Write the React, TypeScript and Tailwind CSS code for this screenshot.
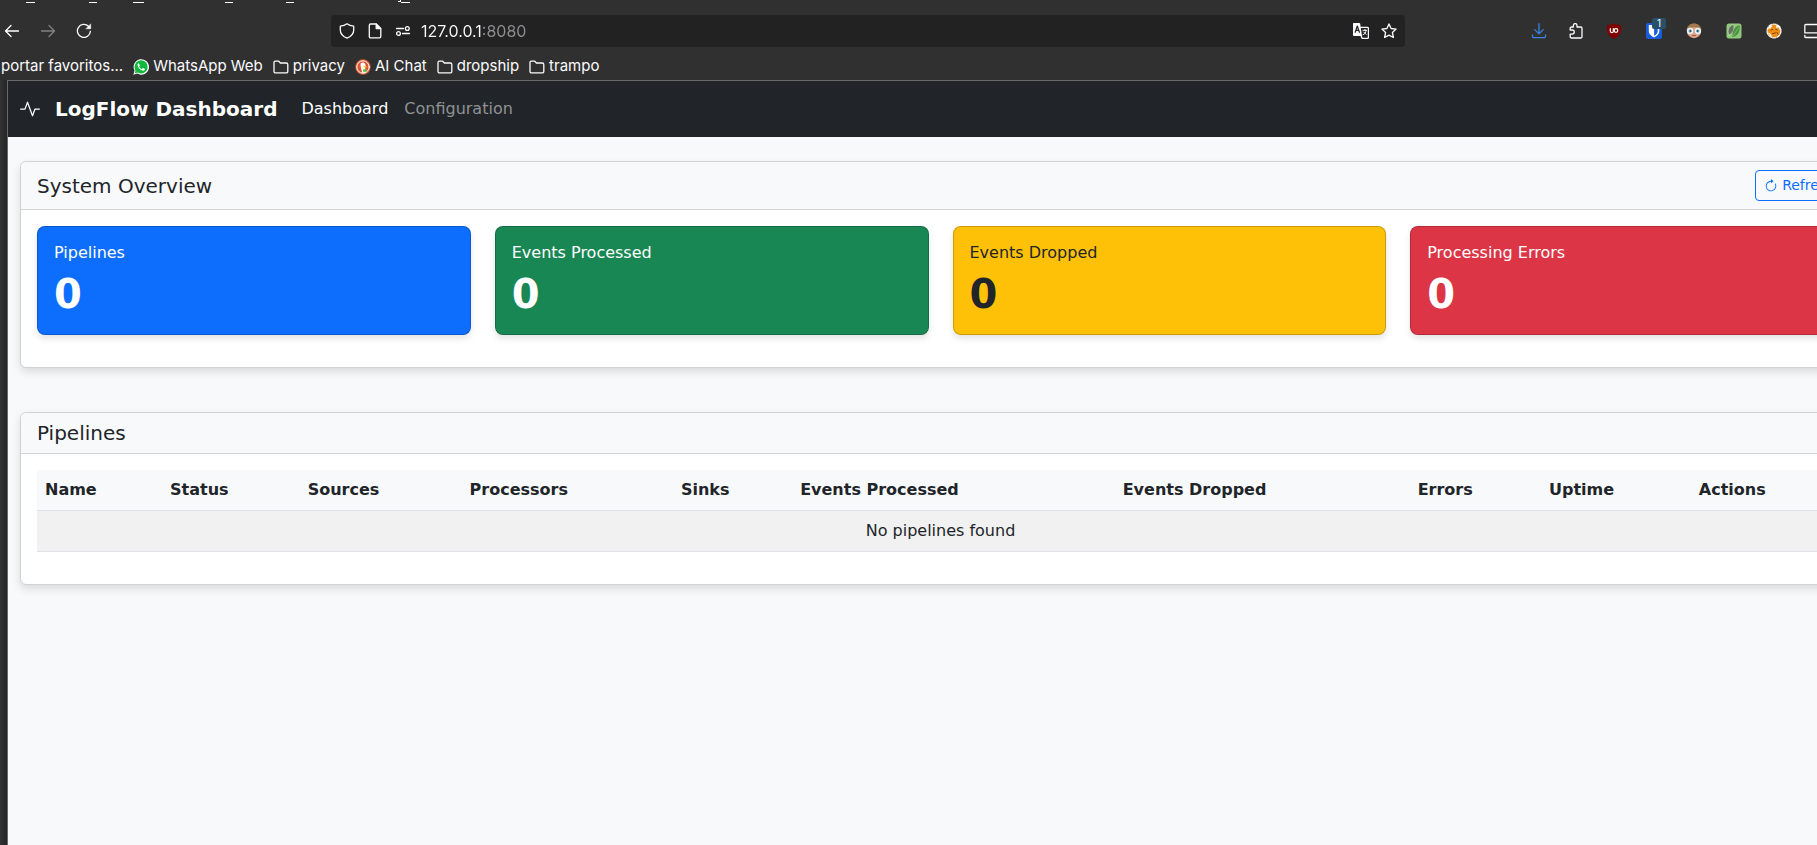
import React from "react";
import { BsActivity, BsArrowClockwise } from "react-icons/bs";

const stats = [
  { label: "Pipelines", value: 0, tone: "bg-[#0d6efd] text-white" },
  { label: "Events Processed", value: 0, tone: "bg-[#198754] text-white" },
  { label: "Events Dropped", value: 0, tone: "bg-[#ffc107] text-[#212529]" },
  { label: "Processing Errors", value: 0, tone: "bg-[#dc3545] text-white" },
];

const columns = [
  "Name",
  "Status",
  "Sources",
  "Processors",
  "Sinks",
  "Events Processed",
  "Events Dropped",
  "Errors",
  "Uptime",
  "Actions",
];

type IconProps = { className?: string; children: React.ReactNode };

function Icon({ className = "", children }: IconProps) {
  return (
    <svg
      viewBox="0 0 16 16"
      className={"size-4 shrink-0 " + className}
      fill="none"
      stroke="currentColor"
      strokeWidth="1.3"
      strokeLinecap="round"
      strokeLinejoin="round"
      aria-hidden="true"
    >
      {children}
    </svg>
  );
}

function ToolButton({ label, width = "w-10", children }: { label: string; width?: string; children: React.ReactNode }) {
  return (
    <button type="button" aria-label={label} className={"flex h-8 shrink-0 items-center justify-center " + width}>
      {children}
    </button>
  );
}

function FolderIcon() {
  return (
    <Icon>
      <path d="M1 12.5v-9A1.3 1.3 0 0 1 2.300 2.200h3.400L7.400 4h6A1.400 1.400 0 0 1 14.800 5.400v7.100a1.400 1.400 0 0 1-1.400 1.400H2.400A1.400 1.400 0 0 1 1 12.500Z" />
    </Icon>
  );
}

function WhatsAppIcon() {
  return (
    <Icon>
      <path d="M.3 15.700 1.500 11.600A7.700 7.700 0 1 1 4.400 14.600Z" fill="#fff" stroke="none" />
      <circle cx="8.100" cy="7.900" r="6.600" fill="#12b83d" stroke="none" />
      <path d="M1.800 14.200l.8-3 2.200 2.300Z" fill="#12b83d" stroke="none" />
      <path
        d="M5.800 4.300c-.9.2-1.300 1-1.200 2 .3 2.600 3 5.200 5.500 5.400 1.100 0 1.900-.6 1.900-1.700l-2-1-1 1.100c-1.200-.4-2.400-1.500-2.900-2.700l.8-1Z"
        fill="#fff"
        stroke="none"
      />
    </Icon>
  );
}

function DuckIcon() {
  return (
    <Icon>
      <circle cx="8" cy="8" r="7.700" fill="#de5833" stroke="none" />
      <circle cx="8" cy="8" r="6.200" fill="#de5833" stroke="#fff" strokeWidth="1" />
      <path d="M5.700 4.200c2-1.500 4.700-.4 4.900 2.300.1 1.300-.5 2.200-.5 3.200l1 4-3.800.2C6.700 10.700 5 7.200 5.700 4.200Z" fill="#fff" stroke="none" />
      <path d="M8.500 7.300h3.300l-1 1.300H8.500Z" fill="#fdd20a" stroke="none" />
      <path d="M7.800 10.600h3.600v2.200H8.200Z" fill="#4cba3c" stroke="none" />
    </Icon>
  );
}

function Bookmark({ icon, label }: { icon: React.ReactNode; label: string }) {
  return (
    <a href="#" className="flex items-center gap-1 whitespace-nowrap">
      {icon}
      {label}
    </a>
  );
}

function TabFragments() {
  return (
    <svg className="block h-[15px] w-[420px] shrink-0" viewBox="0 0 420 15" fill="#fff" aria-hidden="true">
      <rect x="26" y="2" width="9" height="1" />
      <rect x="89" y="2" width="8" height="1" />
      <rect x="133" y="2" width="11" height="1" />
      <rect x="225" y="2" width="8" height="1" />
      <rect x="286" y="2" width="8" height="1" />
      <path d="M398 2h3V0h-1v1h-2ZM401 2h9v1h-9Z" />
    </svg>
  );
}

function BrowserChrome() {
  return (
    <header className="flex h-20 flex-col overflow-hidden bg-[#303030] font-['Inter',sans-serif] text-[#fbfbfe]">
      <TabFragments />
      <div className="flex h-8 shrink-0 items-center">
        <div className="flex w-[331px] shrink-0">
          <div className="-ml-1.5 flex">
            <ToolButton label="Back" width="w-9">
              <Icon className="text-white">
                <path d="M1.500 8h13M7 2.500 1.500 8 7 13.500" />
              </Icon>
            </ToolButton>
            <ToolButton label="Forward" width="w-9">
              <Icon className="text-[#808080]">
                <path d="M1.500 8h13M9 2.500 14.500 8 9 13.500" />
              </Icon>
            </ToolButton>
            <ToolButton label="Reload" width="w-9">
              <Icon className="text-white">
                <path d="M14.400 8.300A6.500 6.500 0 1 1 12.500 3.300" />
                <path d="M14.700 1.200v4.600h-4.600Z" fill="currentColor" strokeWidth=".5" />
              </Icon>
            </ToolButton>
          </div>
        </div>
        <div className="flex h-8 min-w-0 flex-1 items-center rounded bg-[#222222] pr-0.5 pl-2">
          <div className="flex items-center gap-3">
            <Icon>
              <path d="M8 .8C6 2.400 3.700 3 1.300 3.200V7c0 3.700 2.600 6.500 6.700 8.200 4.100-1.700 6.700-4.500 6.700-8.200V3.200C12.300 3 10 2.400 8 .8Z" />
            </Icon>
            <Icon>
              <path d="M3.600 1h5.600l4.600 4.600v7.900a1.300 1.300 0 0 1-1.300 1.300H3.600a1.300 1.300 0 0 1-1.300-1.300V2.300A1.300 1.300 0 0 1 3.600 1Z" />
              <path d="M9.200 1v4.600h4.600Z" fill="currentColor" />
            </Icon>
            <Icon>
              <path d="M1.500 5.500h7M7.500 10.500h7" />
              <circle cx="12.300" cy="5.500" r="1.900" />
              <circle cx="3.500" cy="10.500" r="1.900" />
            </Icon>
          </div>
          <input
            type="text"
            aria-label="Address"
            defaultValue="127.0.0.1:8080"
            className="ml-2.5 h-8 min-w-0 flex-1 bg-linear-to-r from-[#fbfbfe] from-[60px] to-[#8f8f92] to-[60px] bg-clip-text text-base text-transparent caret-white outline-none"
          />
          <div className="flex items-center">
            <ToolButton label="Translate page" width="w-7">
              <Icon>
                <path d="M.5 0h5.800a1 1 0 0 1 .9.700L9 13H.8A.8.8 0 0 1 0 12.200V.8A.8.8 0 0 1 .5 0Z" fill="currentColor" stroke="none" />
                <path d="M7.700 4.400h6.900a.8.8 0 0 1 .8.8v9.400a.8.8 0 0 1-.8.8H9.200L8.200 13" />
                <path d="M2.200 9.300 4.300 3l2.100 6.300M3 7.300h2.700" stroke="#222" strokeWidth="1.200" />
                <path d="M10 7.300h3.600M11.900 6.500v.8M10 11.700c2-.8 3-2.200 3-4.300M10.700 9l2.400 2.400" strokeWidth="1" />
              </Icon>
            </ToolButton>
            <ToolButton label="Bookmark page" width="w-7">
              <Icon>
                <path d="m8 .9 2.100 4.600 5 .6-3.700 3.400 1 5L8 12.100 3.600 14.500l1-5L.9 6.100l5-.6Z" />
              </Icon>
            </ToolButton>
          </div>
        </div>
        <div className="flex w-[412px] shrink-0 overflow-hidden pl-[116px]">
          <ToolButton label="Downloads" width="w-9">
            <Icon className="text-[#3584e4]">
              <path d="M8 .7v10M3.700 6.600 8 10.900l4.300-4.300M1.500 11.800v1.500a1.400 1.400 0 0 0 1.400 1.400h10.200a1.400 1.400 0 0 0 1.400-1.400v-1.500" />
            </Icon>
          </ToolButton>
          <ToolButton label="Extensions" width="w-[37px]">
            <Icon>
              <path d="M2.200 7V5.200A1.200 1.200 0 0 1 3.400 4h2V2.400a1.800 1.800 0 0 1 3.600 0V4h3.800A1.200 1.200 0 0 1 14 5.200v8.600a1.200 1.200 0 0 1-1.200 1.200H3.400a1.200 1.200 0 0 1-1.200-1.200v-2.700h2a2 2 0 0 0 0-4.100Z" />
            </Icon>
          </ToolButton>
          <ToolButton label="uBlock Origin">
            <Icon>
              <path d="M8 .2C5.800 1.600 3.500 2.100 1 2.200V7c0 4.200 2.800 6.700 7 8.900 4.200-2.200 7-4.700 7-8.900V2.200C12.500 2.100 10.200 1.600 8 .2Z" fill="#800000" stroke="none" />
              <path d="M4.300 5.500v2.600a1.500 1.500 0 0 0 3 .1V5.500" stroke="#fff" strokeWidth="1.200" />
              <circle cx="10" cy="7.500" r="1.800" stroke="#fff" strokeWidth="1.200" />
            </Icon>
          </ToolButton>
          <ToolButton label="Bitwarden, 1 match">
            <span className="relative flex">
              <Icon>
                <rect width="16" height="16" rx="2" fill="#175ddc" stroke="none" />
                <path d="M2.800 2h10.500v6.200c0 2.800-2.300 4.700-5.200 6.200-3-1.500-5.300-3.400-5.300-6.200Z" fill="#fff" stroke="none" />
                <path d="M8.100 3.600h3.600v4.800c0 1.800-1.600 3.100-3.600 4.300Z" fill="#175ddc" stroke="none" />
              </Icon>
              <span className="absolute -top-[5px] left-1.5 h-[11px] w-3.5 rounded-xs bg-[#2a5068] text-center text-[10px] leading-[11px] text-white">
                1
              </span>
            </span>
          </ToolButton>
          <ToolButton label="User agent switcher">
            <Icon>
              <circle cx="8" cy="8" r="7.200" fill="#dba489" stroke="none" />
              <path d="M.7 8C.4 3 4 .4 8 .4S15.600 3 15.300 8l-2-3C10 4 6 4 2.700 5Z" fill="#a27a50" stroke="none" />
              <circle cx="4.100" cy="8" r="2.400" fill="#7fa9b8" stroke="#edf5f7" strokeWidth="1.500" />
              <circle cx="11.900" cy="8" r="2.400" fill="#7fa9b8" stroke="#edf5f7" strokeWidth="1.500" />
              <circle cx="4.500" cy="8" r=".9" fill="#24566b" stroke="none" />
              <circle cx="11.500" cy="8" r=".9" fill="#24566b" stroke="none" />
              <path d="M6.500 12.500h3" stroke="#a2543f" strokeWidth=".9" />
            </Icon>
          </ToolButton>
          <ToolButton label="Reader extension">
            <Icon>
              <rect x=".5" y=".5" width="15" height="15" rx="2.500" fill="#91c97b" stroke="none" />
              <path d="M3 12C.6 7.500 3 2.600 7.500 1.500 8.500 5 8 10 3 12Z" fill="#65735f" stroke="#d3e7c9" strokeWidth=".5" />
              <path d="M6.500 14C6 8 9 3 13.600 2.200 14.500 8 12 13 6.500 14Z" fill="#4c9142" stroke="none" />
              <path d="m7.500 12.500 5-8" stroke="#8acb70" strokeWidth=".7" />
            </Icon>
          </ToolButton>
          <ToolButton label="Cookie extension">
            <Icon>
              <circle cx="8" cy="8" r="6.900" fill="#ef8e16" stroke="#f4eee6" strokeWidth="1.400" strokeDasharray="3 1.500" />
              <path d="M1.500 5.500 4 2.500l2.500.3-2 2.700Z" fill="#fff" stroke="none" />
              <path d="m10.800 1.700 3.700 2.100-.6 3.200-1.600-2.700-2.500.6Z" fill="#fff" stroke="none" />
              <path d="m2 9.500 2.200 1 2 3.500-2-1Z" fill="#fff" stroke="none" />
              <path d="m5 7.200 1.500-.7M9.800 6.500l1.500.5M6.500 10.800l3-.9M11 9.500l1 1.700" stroke="#7a430c" strokeWidth="1" />
            </Icon>
          </ToolButton>
          <ToolButton label="Sidebar" width="w-9">
            <Icon>
              <path d="M1.800 1.500h12.400a1 1 0 0 1 1 1v7.400H.8V2.500a1 1 0 0 1 1-1ZM.8 12.300v1.200a1 1 0 0 0 1 1h12.400a1 1 0 0 0 1-1v-1.200" />
            </Icon>
          </ToolButton>
        </div>
      </div>
      <nav aria-label="Bookmarks" className="flex h-[33px] shrink-0 items-center gap-2.5 pt-1.5 pl-px text-[15px]">
        <a href="#" className="whitespace-nowrap">
          portar favoritos...
        </a>
        <Bookmark icon={<WhatsAppIcon />} label="WhatsApp Web" />
        <Bookmark icon={<FolderIcon />} label="privacy" />
        <Bookmark icon={<DuckIcon />} label="AI Chat" />
        <Bookmark icon={<FolderIcon />} label="dropship" />
        <Bookmark icon={<FolderIcon />} label="trampo" />
      </nav>
    </header>
  );
}

function Card({ title, action, children }: { title: string; action?: React.ReactNode; children: React.ReactNode }) {
  return (
    <section className="rounded-md border border-[#d0d2d4] bg-white shadow-[0_4px_8px_rgba(0,0,0,0.12)]">
      <div className="flex items-center justify-between rounded-t-md border-b border-[#d3d5d7] bg-[#f8f9fb] px-4 py-2">
        <h2 className="text-xl leading-6">{title}</h2>
        {action}
      </div>
      <div className="px-4 pt-4 pb-8">{children}</div>
    </section>
  );
}

export default function App() {
  return (
    <div className="flex min-h-screen flex-col overflow-hidden bg-[#303030]">
      <BrowserChrome />
      <div className="flex grow bg-linear-to-r from-[#333] from-0% to-[#242424] to-[7px] pl-[7px]">
        <div className="-mr-14 grow border-t border-l border-[#6a6a6a] bg-[#f8f9fb] font-['DejaVu_Sans',sans-serif] text-[#212529]">
          <nav className="flex h-14 items-center bg-[#212529] px-3">
            <a href="#" className="flex items-center gap-[15px] text-xl font-bold text-white">
              <BsActivity aria-hidden="true" />
              LogFlow Dashboard
            </a>
            <div className="ml-4 flex text-base">
              <a href="#" aria-current="page" className="px-2 text-white">
                Dashboard
              </a>
              <a href="#" className="px-2 text-[#909294]">
                Configuration
              </a>
            </div>
          </nav>
          <main className="flex flex-col gap-11 px-3 py-6">
            <Card
              title="System Overview"
              action={
                <button
                  type="button"
                  className="flex items-center gap-1 rounded border border-[#0d6efd] px-2 py-1 text-sm leading-[21px] text-[#0d6efd]"
                >
                  <BsArrowClockwise aria-hidden="true" />
                  Refresh
                </button>
              }
            >
              <div className="grid grid-cols-4 gap-6">
                {stats.map((stat) => (
                  <div
                    key={stat.label}
                    className={"rounded-lg border border-black/20 p-4 shadow-[0_4px_6px_rgba(0,0,0,0.1)] " + stat.tone}
                  >
                    <h3 className="mb-2 text-base leading-5">{stat.label}</h3>
                    <p className="text-[40px] leading-[47px] font-bold">{stat.value}</p>
                  </div>
                ))}
              </div>
            </Card>
            <Card title="Pipelines">
              <table className="w-full text-base">
                <thead>
                  <tr className="border-b border-[#dee2e6] bg-[#f8f9fb] text-left">
                    {columns.map((column) => (
                      <th key={column} scope="col" className="p-2 font-bold">
                        {column}
                      </th>
                    ))}
                  </tr>
                </thead>
                <tbody>
                  <tr className="border-b border-[#dee2e6] bg-[#f1f1f1]">
                    <td colSpan={10} className="p-2 text-center">
                      No pipelines found
                    </td>
                  </tr>
                </tbody>
              </table>
            </Card>
          </main>
        </div>
      </div>
    </div>
  );
}
